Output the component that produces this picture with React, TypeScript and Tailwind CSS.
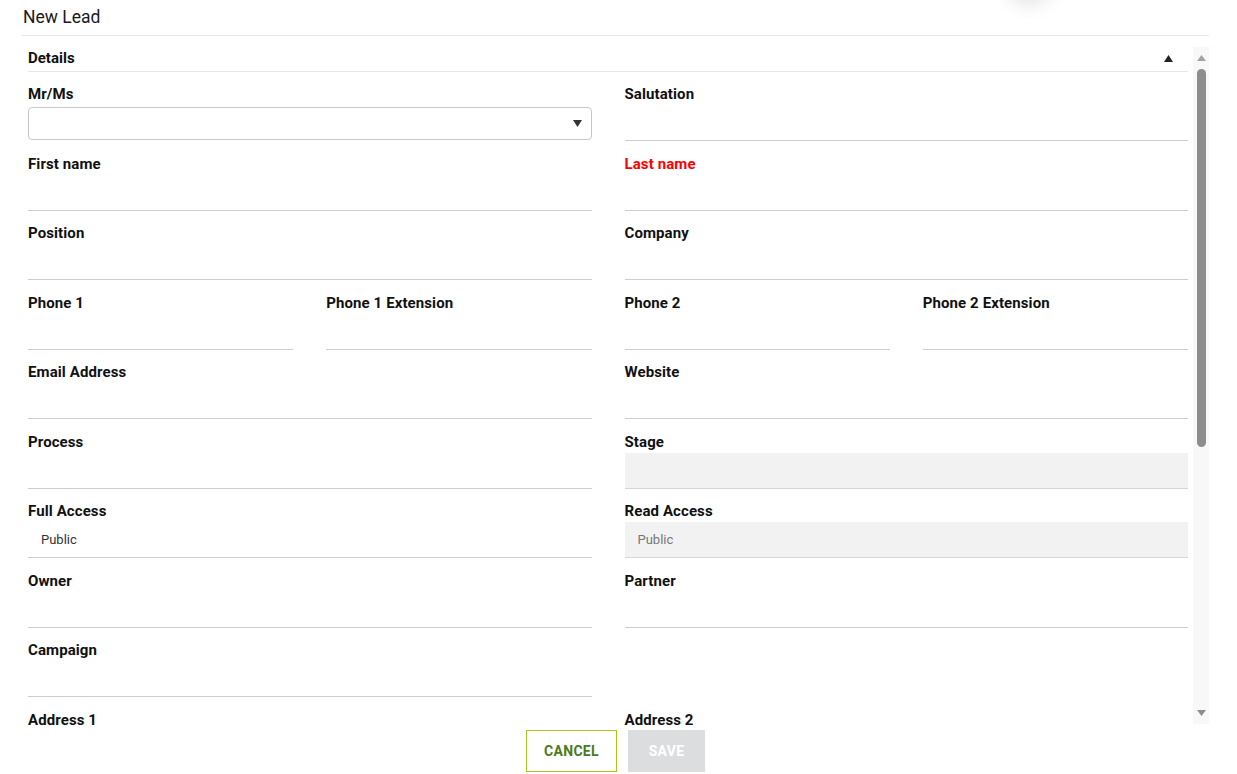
import type { ReactNode } from 'react'

type FieldProps = {
  label: string
  span?: 1 | 2
  required?: boolean
  children?: ReactNode
  variant?: 'line' | 'select' | 'readonly' | 'empty'
}

function Field({ label, span = 2, required, children, variant = 'line' }: FieldProps) {
  return (
    <div className={span === 2 ? 'col-span-2' : 'col-span-1'}>
      <div
        className={`h-[20px] pt-[1px] text-[15px] leading-[20px] font-bold tracking-[0.1px] ${
          required ? 'text-[#ff0000]' : 'text-[#111]'
        }`}
      >
        {label}
      </div>
      {variant === 'select' && (
        <div className="mt-[4px] flex h-[33px] items-center justify-end rounded-[4px] border border-[#c8c8c8] pr-[9px]">
          <svg width="9" height="7" viewBox="0 0 9 7">
            <path d="M0 0h9L4.5 7z" fill="#333" />
          </svg>
        </div>
      )}
      {variant === 'line' && (
        <div className="mt-[2px] flex h-[36px] items-center border-b border-[#cccccc] pl-[13px] text-[13px] text-[#333]">
          {children}
        </div>
      )}
      {variant === 'readonly' && (
        <div className="mt-[2px] flex h-[36px] items-center border-b border-[#d6d6d6] bg-[#f2f2f2] pl-[13px] text-[13px] text-[#777]">
          {children}
        </div>
      )}
    </div>
  )
}

export default function App() {
  return (
    <div className="relative h-[774px] w-full overflow-hidden bg-white font-['Roboto',sans-serif]">
      {/* floating element peeking from above */}
      <div className="absolute left-[1006px] top-[-46px] h-[46px] w-[46px] rounded-full bg-white shadow-[0_6px_18px_rgba(0,0,0,0.10)]" />

      <div className="pl-[22px] pr-[28px]">
        <div className="h-[36px] border-b border-[#e6e6e6] pt-[5px] pl-[1px] text-[17.5px] leading-[24px] text-[#1a1a1a]">
          New Lead
        </div>

        <div className="flex h-[694px]">
          <div className="flex-1 overflow-hidden pl-[6px]">
            <div className="flex h-[36px] items-start justify-between border-b border-[#e6e6e6] pt-[12px] pr-[15px]">
              <span className="text-[15px] leading-[20px] font-bold text-[#111]">Details</span>
              <svg width="9" height="7" viewBox="0 0 9 7" className="mt-[7px]">
                <path d="M4.5 0L9 7H0z" fill="#222" />
              </svg>
            </div>

            <div className="grid grid-cols-4 gap-x-[33px] gap-y-[11.55px] pt-[11px]">
              <Field label="Mr/Ms" variant="select" />
              <Field label="Salutation" />
              <Field label="First name" />
              <Field label="Last name" required />
              <Field label="Position" />
              <Field label="Company" />
              <Field label="Phone 1" span={1} />
              <Field label="Phone 1 Extension" span={1} />
              <Field label="Phone 2" span={1} />
              <Field label="Phone 2 Extension" span={1} />
              <Field label="Email Address" />
              <Field label="Website" />
              <Field label="Process" />
              <Field label="Stage" variant="readonly" />
              <Field label="Full Access">Public</Field>
              <Field label="Read Access" variant="readonly">
                Public
              </Field>
              <Field label="Owner" />
              <Field label="Partner" />
              <Field label="Campaign" />
              <div className="col-span-2" />
              <Field label="Address 1" />
              <Field label="Address 2" />
            </div>
          </div>

          {/* scrollbar */}
          <div className="ml-[5px] mt-[11px] mb-[6px] flex w-[16px] flex-col items-center bg-[#f8f8f8]">
            <svg width="9" height="6" viewBox="0 0 9 6" className="mt-[8px]">
              <path d="M4.5 0L9 6H0z" fill="#a3a3a3" />
            </svg>
            <div className="mt-[8px] h-[378px] w-[9px] rounded-full bg-[#8d8d8d]" />
            <div className="flex-1" />
            <svg width="9" height="6" viewBox="0 0 9 6" className="mb-[8px]">
              <path d="M0 0h9L4.5 6z" fill="#8d8d8d" />
            </svg>
          </div>
        </div>

        <div className="flex justify-center gap-[11px]">
          <button className="h-[42px] w-[91px] border border-[#a8c91a] text-[14px] font-bold tracking-[0.3px] text-[#4d7a1c]">
            CANCEL
          </button>
          <button className="h-[42px] w-[77px] bg-[#dcdddf] text-[14px] font-bold tracking-[0.3px] text-white">
            SAVE
          </button>
        </div>
      </div>
    </div>
  )
}
